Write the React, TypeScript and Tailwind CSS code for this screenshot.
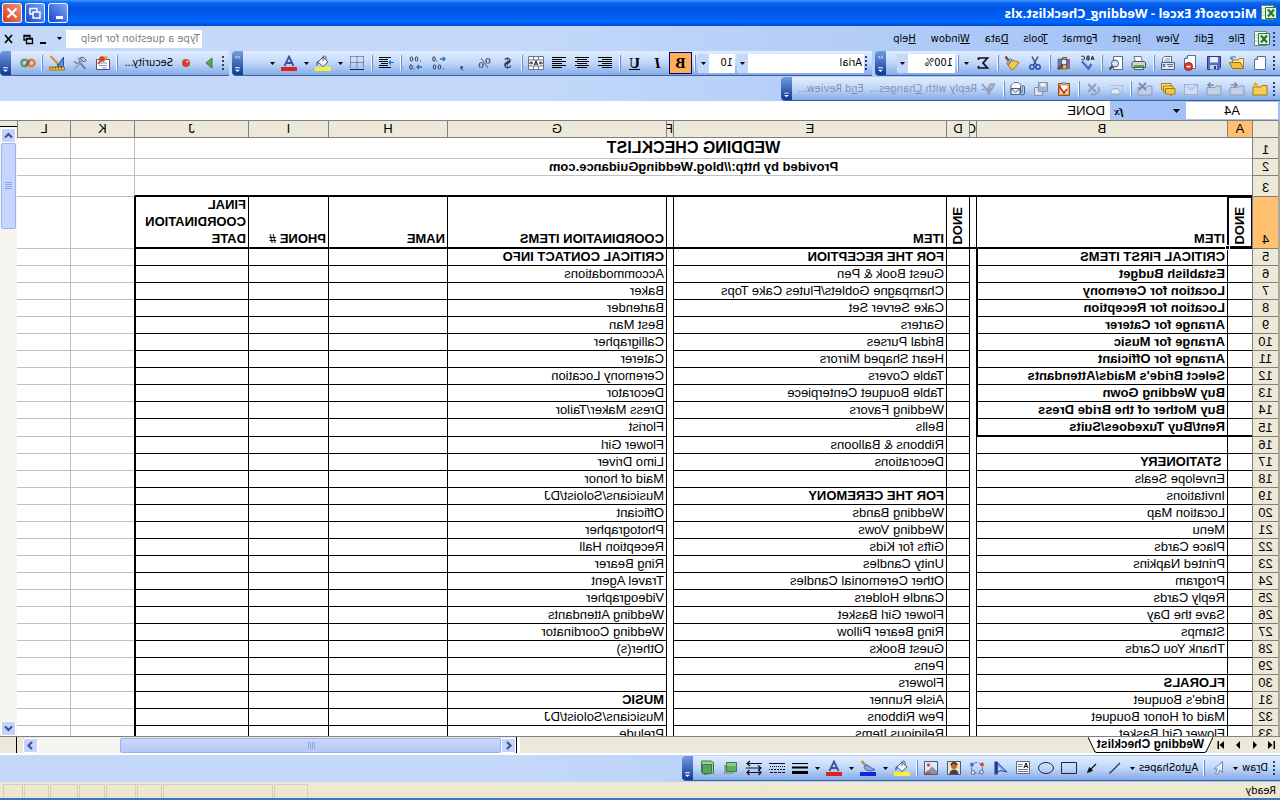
import type { ReactNode } from "react";
import clsx from "clsx";

const UI = "font-['DejaVu_Sans_Condensed','Noto_Sans',sans-serif]";

/* ---------- icons, 16x16 ---------- */

const Page = ({ x = 2, y = 1 }: { x?: number; y?: number }) => (
  <g transform={`translate(${x} ${y})`}>
    <path d="M.5.5h8l3 3v10H.5z" fill="#fff" stroke="#5b6b8c" />
    <path d="M8.500 .5v3h3" fill="#cfdcf2" stroke="#5b6b8c" />
  </g>
);

const GreyFolder = () => (
  <path d="M1 5h5l1 1.500h8V14H1z" fill="#c3cfe4" stroke="#8d9bb8" />
);

const ICONS: Record<string, ReactNode> = {
  new: <Page />,
  open: (
    <>
      <path d="M1.500 13.500v-10h4l1 1.500h6v3" fill="#ffe9a0" stroke="#a87b1e" />
      <path d="M1.500 13.500 4.500 7.500h11l-3 6z" fill="#f7bd3c" stroke="#9c6c10" />
      <path d="M9 2.500c2-1.500 4-1 5 1.500m0-2.500v2.500h-2.500" fill="none" stroke="#2f6fb5" />
    </>
  ),
  save: (
    <>
      <path d="M1.500 1.500h13v13h-11l-2-2z" fill="#5a69c4" stroke="#2b3785" />
      <path d="M4 2h8v5.500H4z" fill="#e9eefc" />
      <path d="M5 10h7v4.500H5z" fill="#c6cdea" />
      <path d="M6 11h2v3H6z" fill="#2b3785" />
    </>
  ),
  permission: (
    <>
      <Page x={3} y={0} />
      <circle cx="10.500" cy="11.500" r="4" fill="#df3d2b" stroke="#9c1c10" />
      <path d="M8.500 10.800h4v1.500h-4z" fill="#fff" />
    </>
  ),
  mail: (
    <>
      <path d="M4.500 1.500h7l2 2v6h-9z" fill="#fff" stroke="#5b6b8c" />
      <path d="M6 4h5M6 6h6" stroke="#7c8cb0" />
      <path d="M1.500 7.500h13v7h-13z" fill="#dfe6f5" stroke="#4e5c7e" />
      <path d="M3 9.500h6M3 11.500h5M11 9.500h2v2h-2z" fill="none" stroke="#5b6b8c" />
    </>
  ),
  print: (
    <>
      <path d="M4.500 7 6 1.500h7L11.500 7" fill="#fff" stroke="#6a7690" />
      <path d="M1.500 7.500 3 6.500h11l1 1v5h-13.500z" fill="#cdd6c8" stroke="#4d5a54" />
      <path d="M3 10h10v2H3z" fill="#55a84e" />
      <path d="M3.500 12.500h9v2h-9z" fill="#f4f4f4" stroke="#4d5a54" />
    </>
  ),
  preview: (
    <g transform="matrix(-1 0 0 1 16 0)">
      <path d="M5.500 1.500h9v13h-9z" fill="#fff" stroke="#5b6b8c" />
      <circle cx="7" cy="8.500" r="3.500" fill="#cfe6fb" stroke="#49536b" />
      <path d="m4.500 11-3 3.500" stroke="#5b4636" strokeWidth="2" />
    </g>
  ),
  spell: (
    <>
      <path d="m1 5 1.500-4L4 5M1.500 3.800h2M6 1v4h1.500a1 1 0 0 0 0-2H6m1.200 0a1 1 0 0 0 0-2H6M13.500 1.500c-2-1-3 0-3 1.500s1 2.500 3 1.500" fill="none" stroke="#222" />
      <path d="m3.500 9 3 4.500L13 6.500" fill="none" stroke="#3f6fc4" strokeWidth="2.400" />
    </>
  ),
  research: (
    <>
      <path d="M2 4h3v10H2z" fill="#8e5fa8" />
      <path d="M5.500 2.500h4V14h-4z" fill="#e6c35b" stroke="#7c5a12" />
      <path d="M10 4h4v10h-4z" fill="#6b7fb8" stroke="#37457a" strokeWidth=".6" />
      <circle cx="8" cy="7" r="3" fill="#d8ecff" stroke="#4b4b5c" />
      <path d="m10 9.500 4 5" stroke="#6b3e20" strokeWidth="2" />
    </>
  ),
  cut: (
    <>
      <path d="M5 1.500 9.500 10M11 1.500 6.500 10" stroke="#3b4c78" strokeWidth="1.400" />
      <circle cx="5" cy="12" r="2.200" fill="none" stroke="#2d53b0" strokeWidth="1.500" />
      <circle cx="11" cy="12" r="2.200" fill="none" stroke="#2d53b0" strokeWidth="1.500" />
    </>
  ),
  painter: (
    <>
      <path d="M1 7.500 8 5l4 5-3.500 5C6 14 3 11 1 7.500z" fill="#f2c84b" stroke="#9a7418" />
      <path d="m8 5 4 5 1.500-1.500-4-5z" fill="#a9b4c9" stroke="#55607a" strokeWidth=".8" />
      <path d="m11.500 5.500 3-4" stroke="#7c4a21" strokeWidth="2.200" />
    </>
  ),
  sum: <path d="M12.500 5V3h-9L8 8l-4.500 5h9v-2" fill="none" stroke="#111" strokeWidth="1.700" />,
  left: <path d="M1 2.500h14M1 4.500h10M1 6.500h14M1 8.500h10M1 10.500h14M1 12.500h10" stroke="#000" />,
  center: <path d="M1 2.500h14M3 4.500h10M1 6.500h14M3 8.500h10M1 10.500h14M3 12.500h10" stroke="#000" />,
  right: <path d="M1 2.500h14M5 4.500h10M1 6.500h14M5 8.500h10M1 10.500h14M5 12.500h10" stroke="#000" />,
  merge: (
    <>
      <path d="M.5 1.500h15v13H.5zM.5 5h15M.5 11h15M5.500 1.500V5M10.500 1.500V5M5.500 11v3.500M10.500 11v3.500" fill="#fff" stroke="#6c7486" />
      <path d="M1 8h3.500m7 0H15M3 6.500 4.500 8 3 9.500M13 6.500 11.500 8l1.500 1.500M6.300 10 8 5.800 9.700 10M7 9h2" fill="none" stroke="#111" />
    </>
  ),
  incDec: (
    <>
      <ellipse cx="12" cy="4" rx="1.300" ry="2.200" fill="none" stroke="#333a50" />
      <path d="M1 4h5M3 2 1 4l2 2" fill="none" stroke="#2f6fb5" strokeWidth="1.300" />
      <path d="M8.500 5.500h1v1h-1zM2 13.500h1v1H2z" fill="#333a50" />
      <ellipse cx="6.500" cy="12" rx="1.300" ry="2.200" fill="none" stroke="#333a50" />
      <ellipse cx="11.500" cy="12" rx="1.300" ry="2.200" fill="none" stroke="#333a50" />
    </>
  ),
  decDec: (
    <>
      <ellipse cx="6.500" cy="4" rx="1.300" ry="2.200" fill="none" stroke="#333a50" />
      <ellipse cx="11.500" cy="4" rx="1.300" ry="2.200" fill="none" stroke="#333a50" />
      <path d="M2 5.500h1v1H2zM8.500 13.500h1v1h-1z" fill="#333a50" />
      <path d="M1 12h5M4 10l2 2-2 2" fill="none" stroke="#2f6fb5" strokeWidth="1.300" />
      <ellipse cx="12" cy="12" rx="1.300" ry="2.200" fill="none" stroke="#333a50" />
    </>
  ),
  indent: (
    <>
      <path d="M3 2.500h12M6 4.500h9M6 6.500h9M6 8.500h7M6 10.500h9M3 12.500h12" stroke="#000" strokeWidth="1.200" />
      <path d="M0 7.500h5M3 5.500l2 2-2 2" fill="none" stroke="#2f6fb5" strokeWidth="1.200" />
    </>
  ),
  borders: (
    <>
      <path d="M1.500 1.500h13M1.500 1.500v12M14.500 1.500v12M8 1.500v12M1.500 7.500h13" fill="none" stroke="#3d465e" strokeDasharray="1 1" />
      <path d="M1 14.500h14" stroke="#1d2740" />
    </>
  ),
  fill: (
    <>
      <path d="M3 7 8 2l5 5-5 4.500z" fill="#f4f7fc" stroke="#4b5876" />
      <path d="M8 6V2.500a1.500 1.500 0 0 0-3 0V5" fill="none" stroke="#4b5876" />
      <path d="M12.500 5.500c2 1 3 3 2 5.500-1-1-2-2-2-3z" fill="#4a74bb" />
      <path d="M0 12h16v4H0z" fill="#f6f032" />
    </>
  ),
  fontColor: (
    <>
      <path d="M3.500 11 8 1.500l4.500 9.500M5 8h6" fill="none" stroke="#3a5596" strokeWidth="1.800" />
      <path d="M0 12h16v4H0z" fill="#e01f1f" />
    </>
  ),
  lineColor: (
    <>
      <path d="m14.500 1-5 5.500" stroke="#c08a55" strokeWidth="2.500" />
      <path d="M10 5C7 5 5 9 1 9.500c3 2.500 10 1.500 11-2z" fill="#8fabdd" stroke="#3e5c9a" />
      <path d="M0 12h16v4H0z" fill="#1422e6" />
    </>
  ),
  run: <path d="m5 3 6 5-6 5z" fill="#58a848" stroke="#3d7a34" />,
  record: (
    <>
      <circle cx="8" cy="8" r="4" fill="#d2402c" />
      <circle cx="6.800" cy="6.500" r="1.500" fill="#f09a86" />
    </>
  ),
  vbe: (
    <>
      <path d="M1.500 4.500h13v10h-13z" fill="#fff" stroke="#4b5876" />
      <path d="M4 8h8M4 10.500h8M4 13h5" stroke="#8994b3" />
      <path d="m3 2 3-1 4 5-3 1z" fill="#e0a83a" />
      <circle cx="9" cy="4" r="2.800" fill="#d8402e" />
      <path d="m10 5 3 4" stroke="#d8402e" strokeWidth="1.800" />
    </>
  ),
  toolbox: (
    <>
      <path d="m2.500 14 8-9" stroke="#76819a" strokeWidth="2" />
      <path d="m4.500 4.500 9 9.500" stroke="#98a2b8" strokeWidth="2" />
      <path d="M1.500 5.500 5 2l3 1-4 4zM10 2.500a3 3 0 1 0 4 3.500" fill="#c7cede" stroke="#5a6580" />
    </>
  ),
  design: (
    <>
      <path d="M8 11.500H1.500V2z" fill="#5f90dd" stroke="#2b559f" />
      <path d="m7 9 7.500-8" stroke="#d98f2e" strokeWidth="2.200" />
      <path d="m5.500 10.500 1.500-2 1 1z" fill="#222" />
      <path d="M.5 12h15v3H.5z" fill="#f5c02d" stroke="#9c7712" />
      <path d="M3.500 12v1.500m3-1.500v1.500m3-1.500v1.500m3-1.500v1.500" stroke="#5f4706" />
    </>
  ),
  script: (
    <>
      <circle cx="4.700" cy="8" r="3.300" fill="none" stroke="#e0852c" strokeWidth="2.500" />
      <circle cx="11.300" cy="8" r="3.300" fill="none" stroke="#57a05b" strokeWidth="2.500" />
      <path d="m6.500 5.500 3.500 5" stroke="#cc4433" strokeWidth="2.500" />
    </>
  ),
  newComment: (
    <>
      <path d="M1 4.500h5l1 1.500h8v8H1z" fill="#f5cf4f" stroke="#a37a14" />
      <path d="M12.500 1v5M10 3.500h5M11 2l3 3m0-3-3 3" stroke="#e8b416" />
    </>
  ),
  prevComment: (
    <>
      <GreyFolder />
      <path d="M14 4H8m2.500-2.500L8 4l2.500 2.500" fill="none" stroke="#7c8aa8" strokeWidth="1.600" />
    </>
  ),
  nextComment: (
    <>
      <GreyFolder />
      <path d="M8 4h6m-2.500-2.500L14 4l-2.500 2.500" fill="none" stroke="#7c8aa8" strokeWidth="1.600" />
    </>
  ),
  showComment: <path d="M1.500 3.500h13v10h-13zM1.500 3.500 8 9l6.500-5.500" fill="#d1dcee" stroke="#93a1bd" strokeDasharray="2 1" />,
  allComments: (
    <>
      <path d="M5 2.500h9.500v6H5z" fill="#ffe27a" stroke="#a37a14" />
      <path d="M3 5h9.500v6H3z" fill="#ffd95c" stroke="#a37a14" />
      <path d="M1 7.500h9.500v5.500h-4L5 15v-2H1z" fill="#f7c93d" stroke="#a37a14" />
    </>
  ),
  deleteComment: (
    <>
      <GreyFolder />
      <path d="m7 2 7 7m0-7L7 9" stroke="#7c8aa8" strokeWidth="1.800" />
    </>
  ),
  ink: (
    <>
      <path d="M1 4.500h14M1.500 4.500v8" fill="none" stroke="#9aa8c4" strokeDasharray="1 1" />
      <path d="M4 12c0-4 3-5 6-4 3 0 4 3 2 5H4z" fill="#e3ebf8" stroke="#9aa8c4" />
    </>
  ),
  eraseInk: (
    <>
      <path d="M3 6c-3 4 1 9 7 7" fill="none" stroke="#8f9dba" strokeWidth="1.500" />
      <path d="m5 3 8 8M13 3 5 11" stroke="#8f9dba" strokeWidth="1.800" />
    </>
  ),
  task: (
    <>
      <path d="M2.500 2.500h11v12h-11z" fill="#e5a14e" stroke="#8c5218" />
      <path d="M4.500 4.500h7v8h-7z" fill="#fff" />
      <path d="M6 1h4v3H6z" fill="#9aa3b5" />
      <path d="m5 8 3 4 5-7" fill="none" stroke="#d8332a" strokeWidth="2" />
    </>
  ),
  updateFile: (
    <>
      <path d="M6.500 6.500h8v8h-8z" fill="#d8e1f0" stroke="#8492b0" />
      <path d="M1.500 1.500h9v9h-9z" fill="#a9b6d0" stroke="#8492b0" />
      <path d="M3.500 2h5v3.500h-5z" fill="#eef2fa" />
    </>
  ),
  attach: (
    <>
      <path d="M3.500 5.500 8 1.500h4l3 3v9h-9" fill="#fff" stroke="#5b6b8c" />
      <path d="M6 7.500h9v6H6zl4.500 3.500L15 7.500" fill="#e4eaf7" stroke="#4e5c7e" />
      <path d="M5.500 5v7a2 2 0 0 1-4 0V6a1.200 1.200 0 0 1 2.400 0v5.500" fill="none" stroke="#55617f" />
    </>
  ),
  reply: (
    <>
      <path d="M2 3h5l3 6-1.500 5z" fill="#aab6cf" stroke="#8492b0" />
      <path d="m6 7 3 3 6-7m-3 6 3-1" fill="none" stroke="#8492b0" strokeWidth="1.300" />
    </>
  ),
  pointer: <path d="M4.500 1.500v11L7 10l2.500 4.500 2-1L9.500 9H13z" fill="#e7eefb" stroke="#7284ab" />,
  line: <path d="m3 3 10.500 10.500" stroke="#2c3752" strokeWidth="1.200" />,
  arrow: (
    <>
      <path d="m4 4 6 6" stroke="#111" strokeWidth="1.300" />
      <path d="M12.500 12.500 7.500 10.500l3-3z" fill="#111" stroke="#111" />
    </>
  ),
  rect: <path d="M.5 2.500h15v11H.5z" fill="none" stroke="#1d2740" />,
  ellipse: <ellipse cx="8" cy="8" rx="7.500" ry="5.500" fill="none" stroke="#1d2740" />,
  textbox: (
    <>
      <path d="M1.500 1.500h13v12h-13z" fill="#f7f9fd" stroke="#5b6b8c" />
      <path d="M3 8 5 3l2 5M3.700 6.500h2.600" fill="none" stroke="#111" />
      <path d="M8.500 4.500H13M8.500 6.500H13M3 9.500h10M3 11.500h10" stroke="#6b7a9c" />
    </>
  ),
  wordart: (
    <>
      <path d="M1 12 11 2v11l-3-2.500z" fill="#7ea9ee" stroke="#23509e" />
      <path d="M12 1.500v13" stroke="#1b3f86" strokeWidth="3" />
      <path d="m9.500 6.500-3 3.500h3z" fill="#dfeaff" />
    </>
  ),
  diagram: (
    <>
      <circle cx="8" cy="8" r="5.500" fill="none" stroke="#50628e" strokeDasharray="3 2" />
      <circle cx="3" cy="4.500" r="2" fill="#c4533f" />
      <circle cx="13" cy="4.500" r="2" fill="#4b72bf" />
      <circle cx="3.500" cy="12" r="1.800" fill="#e7edf9" stroke="#50628e" />
      <circle cx="12" cy="12.500" r="1.800" fill="#fff" stroke="#50628e" />
    </>
  ),
  clipart: (
    <>
      <path d="M1.500 1.500h13v13h-13z" fill="#f3e4bf" stroke="#4b5876" />
      <circle cx="8" cy="6" r="3" fill="#b86a38" />
      <path d="M3.500 14c0-6 9-6 9 0z" fill="#43434f" />
      <path d="M5 5c1-3 5-3 6 0" stroke="#3a2414" fill="none" strokeWidth="1.500" />
    </>
  ),
  picture: (
    <>
      <path d="M1.500 1.500h13v13h-13z" fill="#dce9fb" stroke="#4b5876" />
      <path d="M2 14V11l5-4.500 7 7.500z" fill="#8a93a8" />
      <path d="m7 14 4-4 3 3v1z" fill="#c5604a" />
      <circle cx="10.500" cy="5" r="1.700" fill="#d94f3a" />
    </>
  ),
  lineStyle: <path d="M0 3h16v1H0zM0 6.500h16v2H0zM0 11h16v3H0z" fill="#000" />,
  dashStyle: (
    <>
      <path d="M0 3.500h16" stroke="#111" />
      <path d="M0 6.500h16" stroke="#111" strokeDasharray="1 1" />
      <path d="M0 9.500h16" stroke="#111" strokeDasharray="2 1" />
      <path d="M0 12.500h16" stroke="#111" strokeDasharray="3 1" />
    </>
  ),
  arrowStyle: <path d="M0 3.500h15M12 1l3 2.500L12 6M1 8h15M4 5.500 1 8l3 2.500M1 12.500h14M3.500 10 1 12.500 3.500 15M12.500 10l2.500 2.500-2.500 2.500" fill="none" stroke="#111" strokeWidth="1.200" />,
  shadow: (
    <>
      <path d="M5 5h10v9H5z" fill="#8ea2b4" />
      <path d="M2.500 2.500h10v9h-10z" fill="#5fae60" stroke="#3f7a46" />
      <path d="M3 3h9v3H3z" fill="#8fcb8c" />
    </>
  ),
  cube: (
    <>
      <path d="M2.500 2.500 5 1h9.500v11l-3 2.500-9-1.500z" fill="#9ad197" stroke="#3f7a46" />
      <path d="M4.500 4.500h9v9h-9z" fill="#57a558" stroke="#3f7a46" />
    </>
  ),
};

const Icon = ({ name }: { name: string }) => (
  <svg viewBox="0 0 16 16" className="size-4 shrink-0" aria-hidden="true">
    {ICONS[name]}
  </svg>
);

const ExcelLogo = () => (
  <svg viewBox="0 0 16 16" className="size-4 shrink-0" aria-hidden="true">
    <path d="M3.500.5h12v14h-12z" fill="#fff" stroke="#6a8f6c" />
    <path d="M12 4h3M12 7h3M12 10h3" stroke="#9fc3a0" />
    <path d="M.5 2.500h11v11H.5z" fill="#e5f3e4" stroke="#2b7a35" />
    <path d="m3 4.500 6 7m0-7-6 7" stroke="#1f7a2e" strokeWidth="2.200" />
  </svg>
);

/* ---------- toolbar parts ---------- */

const Caret = () => (
  <svg viewBox="0 0 5 3" className="h-[3px] w-[5px] shrink-0" aria-hidden="true">
    <path d="M0 0h5L2.500 3z" fill="#000" />
  </svg>
);

const Tool = ({ name, label }: { name: string; label: string }) => (
  <button aria-label={label} className="flex h-[22px] w-[23px] shrink-0 items-center justify-center">
    <Icon name={name} />
  </button>
);

const DropCaret = ({ label }: { label: string }) => (
  <button aria-label={label} className="flex h-[22px] w-[11px] shrink-0 items-center justify-center">
    <Caret />
  </button>
);

const Sep = () => (
  <div className="flex w-1.5 shrink-0 justify-center">
    <div className="h-4 w-px bg-[#6a8ccb]" />
    <div className="h-4 w-px bg-[#f1f9ff]" />
  </div>
);

const Grip = () => (
  <svg viewBox="0 0 3 16" className="ml-[5px] h-4 w-[3px] shrink-0" aria-hidden="true">
    <path d="M0 1h2v2H0zm0 4h2v2H0zm0 4h2v2H0zm0 4h2v2H0z" fill="#27417b" />
  </svg>
);

const EndCap = ({ chevrons = false }: { chevrons?: boolean }) => (
  <button
    aria-label="Toolbar options"
    className="h-full w-[11px] shrink-0 rounded-r-sm bg-linear-to-b from-[#759ae0] to-[#0b3a92]"
  >
    <svg viewBox="0 0 11 25" className="h-full w-full" aria-hidden="true">
      {chevrons && <path d="m3 5 1.500 1.500L3 8m3-3 1.500 1.500L6 8" fill="none" stroke="#fff" />}
      <path d="M3 17h5v1H3zm0 2.500h5L5.500 22z" fill="#fff" />
    </svg>
  </button>
);

const Strip = ({ children, className }: { children: ReactNode; className?: string }) => (
  <div
    className={clsx(
      "flex items-center rounded-r-sm border-b border-[#3b619c] bg-linear-to-b from-[#e0edff] via-[#c1d7f9] to-[#84aae6]",
      className,
    )}
  >
    {children}
  </div>
);

const Combo = ({ label, value, className }: { label: string; value: string; className: string }) => (
  <div className={clsx("relative flex h-[19px] shrink-0 bg-white", className)}>
    <select aria-label={label} className="min-w-0 flex-1 appearance-none bg-transparent px-0.5 outline-none">
      <option>{value}</option>
    </select>
    <div className="pointer-events-none flex w-[11px] items-center justify-center bg-[#c3d8f8]">
      <Caret />
    </div>
  </div>
);

/* ---------- bars ---------- */

const MENU = [
  ["", "F", "ile"],
  ["", "E", "dit"],
  ["", "V", "iew"],
  ["", "I", "nsert"],
  ["F", "o", "rmat"],
  ["", "T", "ools"],
  ["", "D", "ata"],
  ["", "W", "indow"],
  ["", "H", "elp"],
];

const TitleBar = () => (
  <header className="flex h-[26px] shrink-0 items-center bg-[linear-gradient(#3d95ff_0,#0a66f0_3px,#0054e3_8px,#005cf0_15px,#0068ff_22px,#0048d0_26px)] pr-0.5 pl-[3px] text-white">
    <ExcelLogo />
    <h1 className="ml-1 font-['Open_Sans','Noto_Sans',sans-serif] text-[13px] leading-4 font-bold">
      Microsoft Excel - Wedding_Checklist.xls
    </h1>
    <div className="ml-auto flex gap-[3px]">
      <button aria-label="Minimize" className="size-5 rounded-[3px] border border-white/90 bg-linear-to-br from-[#7fa2f5] to-[#1745c8]">
        <svg viewBox="0 0 18 18"><path d="M4 12h7v3H4z" fill="#fff" /></svg>
      </button>
      <button aria-label="Restore" className="size-5 rounded-[3px] border border-white/90 bg-linear-to-br from-[#7fa2f5] to-[#1745c8]">
        <svg viewBox="0 0 18 18">
          <path d="M7 8V4.500h7V10h-3" fill="none" stroke="#fff" strokeWidth="1.500" />
          <path d="M4 8h7v6H4z" fill="none" stroke="#fff" strokeWidth="1.500" />
        </svg>
      </button>
      <button aria-label="Close" className="size-5 rounded-[3px] border border-white/90 bg-linear-to-br from-[#f0937a] to-[#cc3a12]">
        <svg viewBox="0 0 18 18"><path d="m4.500 4.500 9 9m0-9-9 9" stroke="#fff" strokeWidth="2.200" /></svg>
      </button>
    </div>
  </header>
);

const MenuBar = () => (
  <nav className="flex h-[25px] shrink-0 items-center">
    <Grip />
    <button aria-label="Workbook" className="ml-0.5"><ExcelLogo /></button>
    <div className="ml-0.5 flex gap-px">
      {MENU.map(([pre, key, post]) => (
        <button key={key + post} className="px-[7px] leading-4">
          {pre}<u>{key}</u>{post}
        </button>
      ))}
    </div>
    <div className="ml-auto flex h-[18px] bg-white">
      <input aria-label="Help search" placeholder="Type a question for help" className="w-[136px] pl-0.5 outline-none placeholder:text-[#808080]" />
      <button aria-label="Recent questions" className="flex w-3 items-center justify-center bg-[#c3d8f8]"><Caret /></button>
    </div>
    <div className="ml-0.5 flex">
      <button aria-label="Minimize workbook" className="size-4"><svg viewBox="0 0 16 16"><path d="M6 11h6v2H6z" /></svg></button>
      <button aria-label="Restore workbook" className="size-4">
        <svg viewBox="0 0 16 16"><path d="M6 7V4.500h6V9h-2M3.500 7.500h6v5h-6zM3.500 8h6M6 5h6" fill="none" stroke="#000" strokeWidth="1.300" /></svg>
      </button>
      <button aria-label="Close workbook" className="ml-1 size-4"><svg viewBox="0 0 16 16"><path d="m4 4 7 8m0-8-7 8" stroke="#000" strokeWidth="1.700" /></svg></button>
    </div>
  </nav>
);

const LETTER = "h-[22px] w-[23px] shrink-0 font-['Liberation_Serif',serif] text-[15px] leading-4";

const StandardBar = () => (
  <div className="flex h-[26px] shrink-0 pb-px">
    <Strip className="mr-[3px]">
      <Grip />
      <Tool name="new" label="New" />
      <Tool name="open" label="Open" />
      <Tool name="save" label="Save" />
      <Tool name="permission" label="Permission" />
      <Tool name="mail" label="E-mail" />
      <Sep />
      <Tool name="print" label="Print" />
      <Tool name="preview" label="Print preview" />
      <Sep />
      <Tool name="spell" label="Spelling" />
      <Tool name="research" label="Research" />
      <Sep />
      <Tool name="cut" label="Cut" />
      <Tool name="painter" label="Format painter" />
      <Sep />
      <Tool name="sum" label="AutoSum" />
      <DropCaret label="AutoSum options" />
      <Sep />
      <Combo label="Zoom" value="100%" className="mr-[11px] w-[58px] text-right" />
      <EndCap chevrons />
    </Strip>
    <Strip className="mr-[3px]">
      <Grip />
      <Combo label="Font" value="Arial" className="w-[127px]" />
      <Combo label="Font size" value="10" className="ml-0.5 w-[37px] text-right" />
      <Sep />
      <button className={clsx(LETTER, "border border-[#000080] bg-[#ffae5a] font-bold")}>B</button>
      <button className={clsx(LETTER, "font-bold italic")}>I</button>
      <button className={clsx(LETTER, "font-bold underline")}>U</button>
      <Sep />
      <Tool name="left" label="Align left" />
      <Tool name="center" label="Center" />
      <Tool name="right" label="Align right" />
      <Tool name="merge" label="Merge and center" />
      <Sep />
      <button className={clsx(LETTER, "font-bold text-[#2c3752]")}>$</button>
      <button className={clsx(LETTER, "text-[#2c3752]")}>%</button>
      <button className={clsx(LETTER, "font-bold text-[#2c3752]")}>,</button>
      <Tool name="incDec" label="Increase decimal" />
      <Tool name="decDec" label="Decrease decimal" />
      <Sep />
      <Tool name="indent" label="Increase indent" />
      <Sep />
      <Tool name="borders" label="Borders" />
      <DropCaret label="Border options" />
      <Tool name="fill" label="Fill color" />
      <DropCaret label="Fill color options" />
      <Tool name="fontColor" label="Font color" />
      <DropCaret label="Font color options" />
      <div className="w-6" />
      <EndCap chevrons />
    </Strip>
    <Strip className="grow">
      <Grip />
      <Tool name="run" label="Run macro" />
      <Tool name="record" label="Record macro" />
      <button className="pr-1 pl-0.5">Security...</button>
      <Sep />
      <Tool name="vbe" label="Visual Basic Editor" />
      <Tool name="toolbox" label="Control toolbox" />
      <Tool name="design" label="Design mode" />
      <Sep />
      <Tool name="script" label="Script editor" />
      <div className="grow" />
      <EndCap />
    </Strip>
  </div>
);

const ReviewBar = () => (
  <div className="flex h-6 shrink-0">
    <Strip className="text-[#8190ae]">
      <Grip />
      <Tool name="newComment" label="New comment" />
      <Tool name="prevComment" label="Previous comment" />
      <Tool name="nextComment" label="Next comment" />
      <Tool name="showComment" label="Show comment" />
      <Tool name="allComments" label="Show all comments" />
      <Tool name="deleteComment" label="Delete comment" />
      <Sep />
      <Tool name="ink" label="Show ink" />
      <Tool name="eraseInk" label="Delete ink" />
      <Sep />
      <Tool name="task" label="Create task" />
      <Tool name="updateFile" label="Update file" />
      <Tool name="attach" label="Send as attachment" />
      <Sep />
      <button className="flex items-center gap-1 pl-1">
        <Icon name="reply" />
        <span>Reply with <u>C</u>hanges...</span>
      </button>
      <button className="px-1.5">E<u>n</u>d Review...</button>
      <EndCap />
    </Strip>
  </div>
);

const FormulaBar = () => (
  <div className="flex h-[19px] shrink-0 items-center pl-0.5 font-['Liberation_Sans',Arial,sans-serif] text-[13px] leading-4">
    <input aria-label="Name box" defaultValue="A4" className="h-[17px] w-[92px] bg-white text-center outline-none" />
    <div className="flex h-[17px] w-[76px] items-center justify-between pr-1 pl-1.5">
      <button aria-label="Named ranges">
        <svg viewBox="0 0 7 4" className="h-1 w-[7px]"><path d="M0 0h7L3.500 4z" /></svg>
      </button>
      <button className="font-['Liberation_Serif',serif] text-[11px] font-bold italic">fx</button>
    </div>
    <input aria-label="Formula" defaultValue="DONE" className="h-full min-w-0 flex-1 bg-white pl-[5px] outline-none" />
  </div>
);

/* ---------- sheet ---------- */

const COLS = [
  { id: "A", width: "w-[25px]" },
  { id: "B", width: "w-[251px]" },
  { id: "C", width: "w-[7px]" },
  { id: "D", width: "w-[23px]" },
  { id: "E", width: "w-[273px]" },
  { id: "F", width: "w-[7px]" },
  { id: "G", width: "w-[219px]" },
  { id: "H", width: "w-[119px]" },
  { id: "I", width: "w-[80px]" },
  { id: "J", width: "w-[114px]" },
  { id: "K", width: "w-[64px]" },
  { id: "L", width: "" },
];

// rows 5..33 as [B, E, G]
const ROWS: [string, string, string][] = [
  ["CRITICAL FIRST ITEMS", "FOR THE RECEPTION", "CRITICAL CONTACT INFO"],
  ["Establish Budget", "Guest Book & Pen", "Accommodations"],
  ["Location for Ceremony", "Champagne Goblets/Flutes Cake Tops", "Baker"],
  ["Location for Reception", "Cake Server Set", "Bartender"],
  ["Arrange for Caterer", "Garters", "Best Man"],
  ["Arrange for Music", "Bridal Purses", "Calligrapher"],
  ["Arrange for Officiant", "Heart Shaped Mirrors", "Caterer"],
  ["Select Bride's Maids/Attendants", "Table Covers", "Ceremony Location"],
  ["Buy Wedding Gown", "Table Bouquet Centerpiece", "Decorator"],
  ["Buy Mother of the Bride Dress", "Wedding Favors", "Dress Maker/Tailor"],
  ["Rent/Buy Tuxedoes/Suits", "Bells", "Florist"],
  ["", "Ribbons & Balloons", "Flower Girl"],
  [" STATIONERY", "Decorations", "Limo Driver"],
  ["Envelope Seals", "", "Maid of honor"],
  ["Invitations", "FOR THE CEREMONY", "Musicians/Soloist/DJ"],
  ["Location Map", "Wedding Bands", "Officiant"],
  ["Menu", "Wedding Vows", "Photographer"],
  ["Place Cards", "Gifts for Kids", "Reception Hall"],
  ["Printed Napkins", "Unity Candles", "Ring Bearer"],
  ["Program", "Other Ceremonial Candles", "Travel Agent"],
  ["Reply Cards", "Candle Holders", "Videographer"],
  ["Save the Day", "Flower Girl Basket", "Wedding Attendants"],
  ["Stamps", "Ring Bearer Pillow", "Wedding Coordinator"],
  ["Thank You Cards", "Guest Books", "Other(s)"],
  ["", "Pens", ""],
  ["FLORALS", "Flowers", ""],
  ["Bride's Bouquet", "Aisle Runner", "MUSIC"],
  ["Maid of Honor Bouquet", "Pew Ribbons", "Musicians/Soloist/DJ"],
  ["Flower Girl Basket", "Religious Items", "Prelude"],
];

const isHeading = (text: string) => text.length > 1 && text === text.toUpperCase();

const RowHead = ({ n, active = false }: { n: number; active?: boolean }) => (
  <th
    scope="row"
    className={clsx(
      "border-r border-b border-[#808080] p-0 align-bottom font-normal",
      active ? "bg-[#ffc06f]" : "bg-[#ece9d8]",
    )}
  >
    {n}
  </th>
);

const Blank = () => (
  <>
    <td className="border-r border-b border-[#c0c0c0]" />
    <td className="border-b border-[#c0c0c0]" />
  </>
);

const HEAD_CELL = "border-r border-b-2 border-black px-0.5 py-0 align-bottom";

const Done = () => (
  <span className="inline-block rotate-180 pt-0.5 align-bottom [writing-mode:vertical-rl]">DONE</span>
);

const Sheet = () => (
  <table className="w-full table-fixed border-separate border-spacing-0 font-['Liberation_Sans',Arial,sans-serif] text-[13px] leading-4">
    <colgroup>
      <col className="w-[26px]" />
      {COLS.map((c) => (
        <col key={c.id} className={c.width} />
      ))}
    </colgroup>
    <thead>
      <tr className="h-[18px]">
        <td className="border-y border-r border-[#808080] bg-[#ece9d8] p-0" />
        {COLS.map((c) => (
          <th
            key={c.id}
            scope="col"
            className={clsx(
              "overflow-hidden border-y border-r border-[#808080] p-0 font-normal",
              c.id === "A" ? "bg-[#ffc06f]" : "bg-[#ece9d8]",
            )}
          >
            {c.id}
          </th>
        ))}
      </tr>
    </thead>
    <tbody>
      <tr className="h-[21px]">
        <RowHead n={1} />
        <td colSpan={10} className="border-r border-b border-[#c0c0c0] p-0 text-center text-base leading-5 font-bold">
          WEDDING CHECKLIST
        </td>
        <Blank />
      </tr>
      <tr className="h-[17px]">
        <RowHead n={2} />
        <td colSpan={10} className="border-r border-b border-[#c0c0c0] p-0 text-center font-bold">
          Provided by http://blog.WeddingGuidance.com
        </td>
        <Blank />
      </tr>
      <tr className="h-[21px]">
        <RowHead n={3} />
        <td colSpan={10} className="border-r border-b-2 border-r-[#c0c0c0] border-b-black p-0" />
        <Blank />
      </tr>
      <tr className="h-[52px] leading-[17px] font-bold">
        <RowHead n={4} active />
        <td className={clsx(HEAD_CELL, "relative text-center")}>
          <Done />
          <div className="pointer-events-none absolute inset-0 border border-[#10082c]" />
          <div className="absolute -right-[3px] -bottom-[3px] size-[5px] border border-white bg-black" />
        </td>
        <td className={HEAD_CELL}>ITEM</td>
        <td className={HEAD_CELL} />
        <td className={clsx(HEAD_CELL, "text-center")}><Done /></td>
        <td className={HEAD_CELL}>ITEM</td>
        <td className={HEAD_CELL} />
        <td className={HEAD_CELL}>COORDINATION ITEMS</td>
        <td className={HEAD_CELL}>NAME</td>
        <td className={HEAD_CELL}>PHONE #</td>
        <td className="border-r-2 border-b-2 border-black px-0.5 py-0 align-bottom">
          <div className="flex h-[50px] items-end">FINAL COORDINATION DATE</div>
        </td>
        <Blank />
      </tr>
      {ROWS.map(([b, e, g], i) => {
        const n = i + 5;
        const cell = "border-r border-b border-black px-0.5 py-0 align-top whitespace-pre";
        const gap = "border-r border-black p-0";
        return (
          <tr key={n} className={n === 15 ? "h-[18px]" : "h-[17px]"}>
            <RowHead n={n} />
            <td className={clsx("border-r border-black p-0", n === 15 ? "border-b-2" : "border-b")} />
            <td
              className={clsx(
                "border-black px-0.5 py-0 whitespace-pre",
                n <= 15 ? "border-r-2" : "border-r",
                n === 15 ? "border-b-2" : "border-b",
                (n <= 15 || isHeading(b)) && "font-bold",
              )}
            >
              {b}
            </td>
            <td className={gap} />
            <td className={cell} />
            <td className={clsx(cell, isHeading(e) && "font-bold")}>{e}</td>
            <td className={gap} />
            <td className={clsx(cell, isHeading(g) && "font-bold")}>{g}</td>
            <td className={cell} />
            <td className={cell} />
            <td className="border-r-2 border-b border-black p-0" />
            <Blank />
          </tr>
        );
      })}
    </tbody>
  </table>
);

const ScrollButton = ({ label, d }: { label: string; d: string }) => (
  <button aria-label={label} className="size-[15px] shrink-0 rounded-xs border border-white bg-[#c3d3fd]">
    <svg viewBox="0 0 13 13"><path d={d} fill="none" stroke="#3f5788" strokeWidth="2.200" /></svg>
  </button>
);

const VerticalScroll = () => (
  <div className="flex w-[17px] shrink-0 flex-col items-center bg-[#f6f5f0]">
    <div className="h-1.5 w-full shrink-0 border-t border-[#808080] bg-[#ece9d8]" />
    <div className="mb-px h-px w-full shrink-0 bg-black" />
    <ScrollButton label="Scroll up" d="m3 8.500 3.500-3.500L10 8.500" />
    <div className="flex h-[86px] w-[15px] shrink-0 items-center justify-center rounded-xs border border-[#98b4ea] bg-[#c6d5fd]">
      <svg viewBox="0 0 7 8" className="h-2 w-[7px]"><path d="M0 .5h7M0 2.500h7M0 4.500h7M0 6.500h7" stroke="#8fabe6" /></svg>
    </div>
    <div className="grow" />
    <ScrollButton label="Scroll down" d="m3 4.500 3.500 3.500L10 4.500" />
  </div>
);

const TAB_NAV = [
  ["First sheet", "M2 1h1.500v8H2zM9 1v8L4.500 5z"],
  ["Previous sheet", "M7 1v8L3 5z"],
  ["Next sheet", "M3 1v8l4-4z"],
  ["Last sheet", "M7 1h1.500v8H7zM2 1v8l4.500-4z"],
];

const TabRow = () => (
  <div className="flex h-[17px] shrink-0 border-t border-[#808080] bg-[#ece9d8] font-['Liberation_Sans',Arial,sans-serif] text-[13px] leading-4">
    {TAB_NAV.map(([label, d]) => (
      <button key={label} aria-label={label} className="flex w-[17px] items-center justify-center first:w-4">
        <svg viewBox="0 0 10 10" className="size-2.5"><path d={d} /></svg>
      </button>
    ))}
    <svg viewBox="0 0 8 16" className="h-4 w-2 shrink-0"><path d="M0 0h8v15z" fill="#fff" /><path d="m0 0 7 15h1" fill="none" stroke="#000" /></svg>
    <button className="border-b border-black bg-white px-px text-xs leading-[15px] font-bold">Wedding Checklist</button>
    <svg viewBox="0 0 8 16" className="h-4 w-2 shrink-0"><path d="M8 0H0v15z" fill="#fff" /><path d="M8 0 1 15H0" fill="none" stroke="#000" /></svg>
    <div className="grow" />
    <div className="flex w-[520px] items-center">
      <div className="h-full w-1 border-r border-black bg-white" />
      <ScrollButton label="Scroll left" d="M8 3 4.500 6.500 8 10" />
      <div className="flex h-[15px] grow-9 items-center justify-center rounded-xs border border-[#98b4ea] bg-linear-to-b from-[#cbd8fe] to-[#b7c8f6]">
        <svg viewBox="0 0 8 7" className="h-[7px] w-2"><path d="M.5 0v7M2.500 0v7M4.500 0v7M6.500 0v7" stroke="#8fabe6" /></svg>
      </div>
      <div className="h-full grow-2 bg-[#f6f5f0]" />
      <ScrollButton label="Scroll right" d="M5 3l3.500 3.500L5 10" />
      <div className="ml-1.5 h-full w-[17px] border-l border-black" />
    </div>
  </div>
);

const DrawBar = () => (
  <div className="flex h-[29px] shrink-0 border-t-2 border-white py-px">
    <Strip>
      <Grip />
      <button className="flex items-center gap-1 pr-[3px] pl-1">
        <span>D<u>r</u>aw</span>
        <Caret />
      </button>
      <Tool name="pointer" label="Select objects" />
      <Sep />
      <button className="flex items-center gap-1 px-[3px]">
        <span>A<u>u</u>toShapes</span>
        <Caret />
      </button>
      <Tool name="line" label="Line" />
      <Tool name="arrow" label="Arrow" />
      <Tool name="rect" label="Rectangle" />
      <Tool name="ellipse" label="Oval" />
      <Tool name="textbox" label="Text box" />
      <Tool name="wordart" label="WordArt" />
      <Tool name="diagram" label="Diagram" />
      <Tool name="clipart" label="Clip art" />
      <Tool name="picture" label="Picture" />
      <Sep />
      <Tool name="fill" label="Fill color" />
      <DropCaret label="Fill color options" />
      <Tool name="lineColor" label="Line color" />
      <DropCaret label="Line color options" />
      <Tool name="fontColor" label="Font color" />
      <DropCaret label="Font color options" />
      <Tool name="lineStyle" label="Line style" />
      <Tool name="dashStyle" label="Dash style" />
      <Tool name="arrowStyle" label="Arrow style" />
      <Tool name="shadow" label="Shadow style" />
      <Tool name="cube" label="3-D style" />
      <div className="w-1" />
      <EndCap />
    </Strip>
  </div>
);

const PANES = ["w-[34px]", "w-[110px]", "w-[25px]", "w-[30px]", "w-[26px]", "w-[28px]", "w-[25px]", "w-[20px]"];

const StatusBar = () => (
  <footer className="flex h-4 shrink-0 items-end bg-linear-to-b from-[#ece9d8] to-[#f0e5cc] pr-[3px] pl-1">
    <span className="leading-[14px]">Ready</span>
    <div className="ml-auto flex gap-px">
      {PANES.map((w, i) => (
        <div key={i} className={clsx("h-3.5 border border-b-0 border-[#d3cfbb]", w)} />
      ))}
    </div>
  </footer>
);

// The whole window is shown flipped left to right.
export default function App() {
  return (
    <div
      className={clsx(
        "flex h-screen -scale-x-100 flex-col overflow-hidden border-b-2 border-[#3a77c4] bg-linear-to-r from-[#9ebef5] to-[#c4d9fa] to-60% text-[11px] leading-4 text-black",
        UI,
      )}
    >
      <TitleBar />
      <MenuBar />
      <StandardBar />
      <ReviewBar />
      <FormulaBar />
      <main className="flex min-h-0 flex-1 border-l-2 border-[#aca899] bg-white">
        <div className="min-w-0 flex-1 overflow-hidden">
          <Sheet />
        </div>
        <VerticalScroll />
      </main>
      <TabRow />
      <DrawBar />
      <StatusBar />
    </div>
  );
}
